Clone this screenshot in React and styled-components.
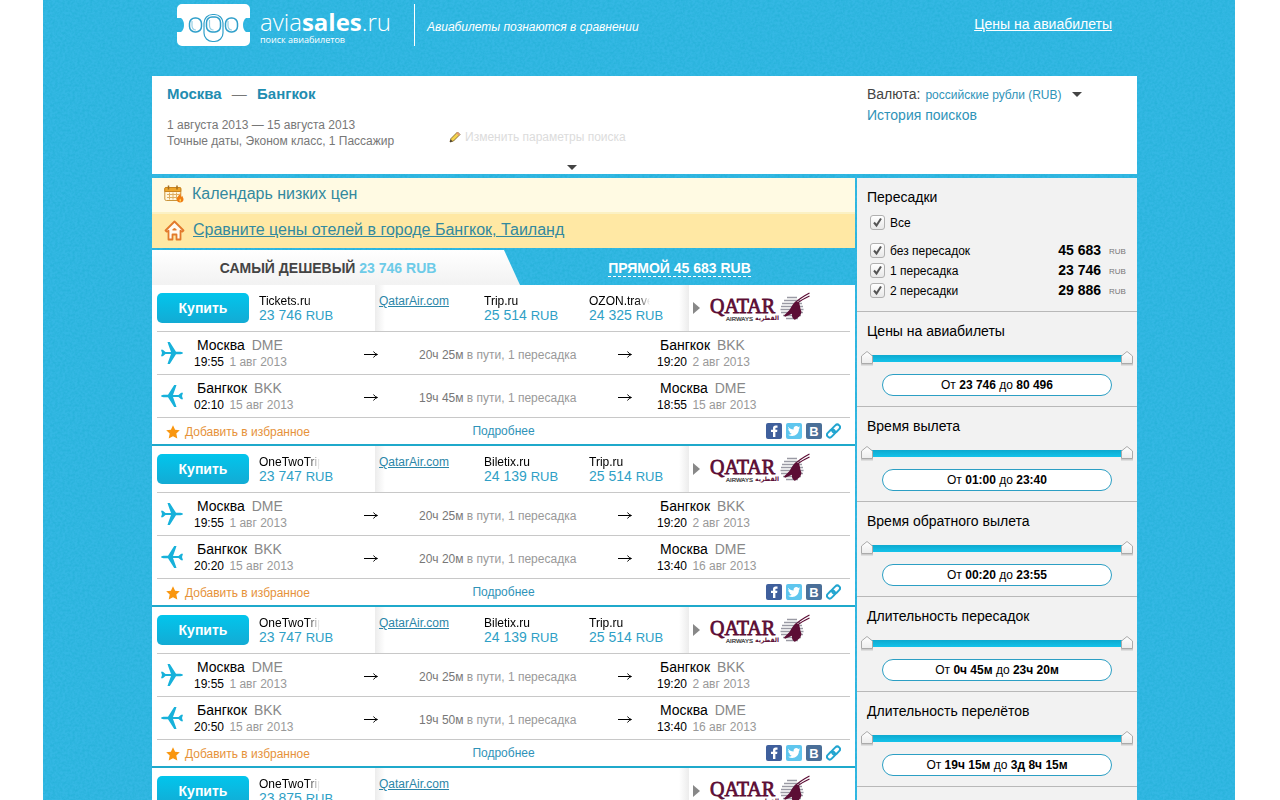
import React, { useState } from "react";
import styled, { createGlobalStyle } from "styled-components";

const legsOut = {
  from: "Москва",
  fromCode: "DME",
  fromTime: "19:55",
  fromDate: "1 авг 2013",
  duration: "20ч 25м",
  to: "Бангкок",
  toCode: "BKK",
  toTime: "19:20",
  toDate: "2 авг 2013",
};

const legBack = (fromTime, duration, toTime, toDate) => ({
  from: "Бангкок",
  fromCode: "BKK",
  fromTime,
  fromDate: "15 авг 2013",
  duration,
  to: "Москва",
  toCode: "DME",
  toTime,
  toDate,
  back: true,
});

const tickets = [
  {
    id: 1,
    best: { name: "Tickets.ru", price: "23 746" },
    offers: [
      { name: "Trip.ru", price: "25 514" },
      { name: "OZON.travel", price: "24 325" },
    ],
    legs: [legsOut, legBack("02:10", "19ч 45м", "18:55", "15 авг 2013")],
  },
  {
    id: 2,
    best: { name: "OneTwoTrip", price: "23 747" },
    offers: [
      { name: "Biletix.ru", price: "24 139" },
      { name: "Trip.ru", price: "25 514" },
    ],
    legs: [legsOut, legBack("20:20", "20ч 20м", "13:40", "16 авг 2013")],
  },
  {
    id: 3,
    best: { name: "OneTwoTrip", price: "23 747" },
    offers: [
      { name: "Biletix.ru", price: "24 139" },
      { name: "Trip.ru", price: "25 514" },
    ],
    legs: [legsOut, legBack("20:50", "19ч 50м", "13:40", "16 авг 2013")],
  },
  {
    id: 4,
    best: { name: "OneTwoTrip", price: "23 875" },
    offers: [],
    legs: [legsOut, legBack("20:50", "19ч 50м", "13:40", "16 авг 2013")],
  },
];

const stops = [
  { id: "direct", label: "без пересадок", price: "45 683" },
  { id: "one", label: "1 пересадка", price: "23 746" },
  { id: "two", label: "2 пересадки", price: "29 886" },
];

const ranges = [
  { id: "price", title: "Цены на авиабилеты", min: "23 746", max: "80 496" },
  { id: "departure", title: "Время вылета", min: "01:00", max: "23:40" },
  { id: "return", title: "Время обратного вылета", min: "00:20", max: "23:55" },
  { id: "layover", title: "Длительность пересадок", min: "0ч 45м", max: "23ч 20м" },
  { id: "flight", title: "Длительность перелётов", min: "19ч 15м", max: "3д 8ч 15м" },
];

const thumbImage = `url("data:image/svg+xml,%3Csvg xmlns='http://www.w3.org/2000/svg' width='14' height='16'%3E%3ClinearGradient id='g' x2='0' y2='1'%3E%3Cstop stop-color='%23fff'/%3E%3Cstop offset='1' stop-color='%23ececec'/%3E%3C/linearGradient%3E%3Cpath d='M1 14.500h12' stroke='%23ccc' stroke-width='2'/%3E%3Cpath d='M1.500 13.500V6L7 1.500 12.500 6v7.500z' fill='url(%23g)' stroke='%23aaa'/%3E%3C/svg%3E")`;

const grain = `url("data:image/svg+xml,%3Csvg xmlns='http://www.w3.org/2000/svg' width='160' height='160'%3E%3Cfilter id='n'%3E%3CfeTurbulence type='fractalNoise' baseFrequency='.4' numOctaves='2' stitchTiles='stitch'/%3E%3CfeColorMatrix values='0 0 0 0 0 0 0 0 0 .35 0 0 0 0 .5 .8 0 0 0 -.25'/%3E%3C/filter%3E%3Crect width='160' height='160' filter='url(%23n)' opacity='.6'/%3E%3C/svg%3E")`;

const GlobalStyle = createGlobalStyle`
  * {
    box-sizing: border-box;
  }

  body {
    margin: 0;
    background: #fff;
    color: #000;
    font-family: "Liberation Sans", Arial, sans-serif;
    font-size: 12px;
  }

  button, input, select {
    font-family: inherit;
  }

  svg {
    display: block;
    flex: none;
  }
`;

const Page = styled.div`
  height: 100vh;
  overflow-x: hidden;
  overflow-y: auto;
  scrollbar-width: none;
  padding: 0 45px 0 43px;
`;

const Backdrop = styled.div`
  min-height: 100%;
  padding: 0 98px 0 109px;
  background: #34b8e4 ${grain};
`;

// Header
const Header = styled.header`
  display: flex;
  align-items: flex-start;
  height: 76px;
  padding: 4px 25px 0;
  color: #fff;
`;

const LogoLink = styled.a`
  display: flex;
  gap: 10px;
  color: #fff;
  text-decoration: none;
`;

const LogoText = styled.span`
  display: flex;
  flex-direction: column;
  font-family: "Open Sans", "Noto Sans", sans-serif;
`;

const Brand = styled.span`
  height: 30px;
  padding-top: 2px;
  font-size: 24px;
  font-weight: 300;
  line-height: 32px;

  b {
    font-weight: 700;
  }
`;

const BrandNote = styled.span`
  font-size: 9px;
  line-height: 12px;
`;

const Slogan = styled.p`
  height: 42px;
  margin: 0 0 0 23px;
  padding-left: 12px;
  border-left: 1px solid #fff;
  font-size: 12px;
  font-style: italic;
  line-height: 46px;
`;

const HeaderLink = styled.a`
  margin-left: auto;
  color: #fff;
  font-size: 14px;
  line-height: 40px;
`;

// Search summary
const Summary = styled.section`
  display: grid;
  grid-template-columns: 1fr 270px;
  height: 98px;
  margin-bottom: 4px;
  padding: 8px 0 0 15px;
  background: #fff;
`;

const Route = styled.h1`
  margin: 0 0 13px;
  color: #1f8db1;
  font-size: 15px;
  line-height: 20px;

  span {
    margin: 0 6px;
    color: #777;
    font-weight: 400;
  }
`;

const SummaryRow = styled.div`
  display: flex;
  color: #777;
  line-height: 16px;
`;

const TripInfo = styled.div`
  width: 282px;
`;

const EditLink = styled.a`
  display: flex;
  align-items: center;
  gap: 4px;
  padding-top: 8px;
  color: #dcdcdc;
  text-decoration: none;
`;

const ExpandButton = styled.button`
  display: flex;
  justify-content: center;
  margin: 12px 0 0 400px;
  padding: 4px 0;
  border: 0;
  background: none;
`;

const Settings = styled.div`
  color: #444;
  font-size: 14px;
  line-height: 21px;
`;

const Currency = styled.label`
  display: flex;
  align-items: center;
  gap: 5px;
`;

const CurrencySelect = styled.select`
  appearance: none;
  margin-right: 5px;
  padding: 0;
  border: 0;
  background: none;
  color: #2f93b8;
  font-size: 12px;
`;

const PlainLink = styled.a`
  color: #2f93b8;
  text-decoration: none;
`;

// Results
const Columns = styled.div`
  display: grid;
  grid-template-columns: minmax(0, 1fr) 280px;
  gap: 2px;
  align-items: start;
`;

const Promo = styled.a`
  display: flex;
  align-items: center;
  gap: 8px;
  height: ${(props) => (props.$strong ? "34px" : "36px")};
  padding: 0 12px 2px;
  border-bottom: ${(props) => (props.$strong ? "0" : "2px solid #fbf1c4")};
  background: ${(props) => (props.$strong ? "#ffe8a4" : "#fffae3")};
  color: #33899e;
  font-size: 16px;
  text-decoration: ${(props) => (props.$strong ? "underline" : "none")};
`;

const Tabs = styled.div`
  display: grid;
  grid-template-columns: 368fr 335fr;
  height: 35px;
  margin-top: 2px;
`;

const Tab = styled.button`
  padding: 0 16px 0 0;
  border: 0;
  background: ${(props) =>
    props.$active ? "linear-gradient(#fff, #f2f2f2)" : "none"};
  clip-path: ${(props) =>
    props.$active
      ? "polygon(0 0, calc(100% - 16px) 0, 100% 100%, 0 100%)"
      : "none"};
  color: ${(props) => (props.$active ? "#444" : "#fff")};
  font-size: 14px;
  font-weight: 700;

  b {
    color: #6dcbe8;
  }

  span {
    border-bottom: 1px dashed #fff;
  }
`;

const Ticket = styled.article`
  padding: 0 5px;
  border-bottom: 2px solid #1fa9cb;
  background: #fff;
`;

const OfferRow = styled.div`
  display: grid;
  grid-template-columns: 92px 126px minmax(0, 1fr) 161px;
  height: 47px;
  border-bottom: 1px solid #c8c8c8;
`;

const BuyButton = styled.button`
  height: 30px;
  margin-top: 8px;
  border: 0;
  border-radius: 5px;
  background: linear-gradient(#02c5ec, #13abd4);
  color: #fff;
  font-size: 14px;
  font-weight: 700;
`;

const Offer = styled.div`
  padding: 9px 0 0 ${(props) => (props.$first ? "10px" : "0")};
`;

const AgentName = styled.div`
  width: 61px;
  overflow: hidden;
  line-height: 14px;
  white-space: nowrap;
  mask-image: linear-gradient(90deg, #000 48px, transparent);
`;

const Price = styled.a`
  color: #2f9fc6;
  font-size: 14px;
  line-height: 14px;
  text-decoration: none;

  small {
    font-size: 13px;
  }
`;

const OfferStrip = styled.div`
  display: grid;
  grid-template-columns: 105px 105px 1fr;
  padding-left: 4px;
  background:
    linear-gradient(90deg, #ececec, #fff) left / 10px 100% no-repeat,
    linear-gradient(270deg, #ececec, #fff) right / 10px 100% no-repeat;
`;

const AgentLink = styled.a`
  color: #2b86a8;
  line-height: 14px;
`;

const Airline = styled.div`
  display: flex;
  align-items: center;
  gap: 9px;
  padding-left: 4px;
`;

const Leg = styled.div`
  display: grid;
  grid-template-columns: 37px 170px 55px 199px 39px 1fr;
  align-items: center;
  height: 43px;
  border-bottom: 1px solid #c8c8c8;
`;

const PlaneCell = styled.div`
  padding-left: 3px;
`;

const City = styled.div`
  padding-left: 3px;
  font-size: 14px;
  line-height: 17px;

  span {
    margin-left: 3px;
    color: #888;
  }
`;

const Moment = styled.div`
  line-height: 16px;

  span {
    margin-left: 2px;
    color: #999;
  }
`;

const Duration = styled.div`
  padding-top: 3px;
  color: #999;

  span {
    color: #777;
  }
`;

const TicketFooter = styled.footer`
  display: grid;
  grid-template-columns: 1fr auto 1fr;
  align-items: center;
  height: 26px;
`;

const Favorite = styled.button`
  display: flex;
  align-items: center;
  gap: 5px;
  padding: 2px 0 0 9px;
  border: 0;
  background: none;
  color: #e6923a;
  font-size: 12px;
`;

const Share = styled.div`
  display: flex;
  justify-content: flex-end;
  gap: 4px;
  padding-right: 9px;

  a {
    display: block;
  }
`;

// Filters
const Sidebar = styled.aside`
  background: #f2f2f2;
`;

const Filter = styled.section`
  min-height: ${(props) => (props.$tall ? "134px" : "95px")};
  padding-top: 10px;
  border-bottom: 1px solid #b8b8b8;
`;

const FilterTitle = styled.h2`
  margin: 0 10px;
  font-size: 14px;
  font-weight: 400;
  line-height: 18px;
`;

const CheckRow = styled.label`
  display: grid;
  grid-template-columns: 15px 1fr auto 17px;
  align-items: center;
  height: 20px;
  margin: ${(props) => (props.$lead ? "6px 11px 8px 13px" : "0 11px 0 13px")};

  > span {
    padding: 2px 0 0 5px;
  }

  b {
    margin-right: 8px;
    font-size: 14px;
  }

  small {
    padding-top: 3px;
    color: #777;
    font-size: 8px;
  }
`;

const Checkbox = styled.input`
  appearance: none;
  width: 15px;
  height: 15px;
  margin: 0;
  border: 1px solid #b0b0b0;
  border-radius: 3px;
  background: linear-gradient(#fff, #e8e8e8);

  &:checked {
    background:
      url("data:image/svg+xml,%3Csvg xmlns='http://www.w3.org/2000/svg' width='13' height='13'%3E%3Cpath d='M3 6.500 5.500 9.500 10 2.500' fill='none' stroke='%23555' stroke-width='2'/%3E%3C/svg%3E"),
      linear-gradient(#fff, #e8e8e8);
  }
`;

const RangeTrack = styled.div`
  display: grid;
  height: 16px;
  margin: 10px 3px 8px;
  background: linear-gradient(#0ea9cf, #14c3ea) 7px 5px / calc(100% - 14px) 7px
    no-repeat;
`;

const RangeInput = styled.input`
  grid-area: 1 / 1;
  appearance: none;
  width: 100%;
  height: 16px;
  margin: 0;
  background: none;
  pointer-events: none;

  &::-webkit-slider-thumb {
    appearance: none;
    width: 14px;
    height: 16px;
    background: ${thumbImage};
    pointer-events: auto;
  }
`;

const RangeValue = styled.div`
  height: 22px;
  margin: 0 25px;
  border: 1px solid #2c9fc4;
  border-radius: 11px;
  background: #fff;
  line-height: 20px;
  text-align: center;
`;

const TicketMark = () => (
  <svg width="73" height="42" viewBox="0 0 73 42">
    <path
      fill="#fff"
      d="M5 0h63a5 5 0 0 1 5 5v9h-4c-2 1.500-3 4-3 7s1 5.500 3 7h4v9a5 5 0 0 1-5 5H5a5 5 0 0 1-5-5v-9h4c2-1.500 3-4 3-7s-1-5.500-3-7H0V5a5 5 0 0 1 5-5z"
    />
    <g fill="none" stroke="#2f9fca" strokeWidth="1.200">
      <rect x="12.500" y="14" width="12" height="14" rx="5.500" strokeWidth="1.500" />
      <rect x="48.500" y="14" width="12" height="14" rx="5.500" strokeWidth="1.500" />
      <rect x="27" y="10.500" width="19" height="27" rx="8.500" fill="#fff" />
      <rect x="29.500" y="13" width="14" height="15" rx="5.500" strokeWidth="1.500" />
      <path d="M15 17v5q.5 4 4 4M51 17v5q.5 4 4 4M32.500 16v6q.5 4 4 4" opacity=".5" />
    </g>
  </svg>
);

const Caret = () => (
  <svg width="10" height="5" viewBox="0 0 10 5">
    <path d="M0 0h10L5 5z" fill="#444" />
  </svg>
);

const Pencil = () => (
  <svg width="12" height="12" viewBox="0 0 12 12">
    <path d="M1 11l1-3.500L8.500 1 11 3.500 4.500 10z" fill="#f4d24c" stroke="#6d5222" strokeWidth=".8" />
    <path d="M8.500 1 11 3.500 9.800 4.700 7.300 2.200z" fill="#e59a77" />
    <path d="M1 11l.7-2.500 1.800 1.800z" fill="#333" />
  </svg>
);

const CalendarIcon = () => (
  <svg width="20" height="18" viewBox="0 0 20 18">
    <rect x=".8" y="2.500" width="16" height="13" rx="1.500" fill="#fff6dc" stroke="#c9943c" />
    <path d="M.8 3.500a1 1 0 0 1 1-1h14a1 1 0 0 1 1 1V6.500H.8z" fill="#eda52b" stroke="#c98420" />
    <path d="M4.500.5v4M13 .5v4" stroke="#a56d1d" strokeWidth="1.500" />
    <path d="M3 9.500h12M3 12.500h12M5.500 7.500v7M9 7.500v7M12.500 7.500v7" stroke="#dfae62" />
    <path d="M16 7.500c.2 2.500-3.200 4-3.200 7 0 2 1.500 3 3.300 3s3.400-1 3.400-3c0-1.800-1-2.500-1.300-3.700-.5.400-.7.900-.8 1.400C16.500 11 17 9 16 7.500z" fill="#ef7d12" />
    <path d="M16.200 13.500c-.8 1-1.300 3 0 3.200 1.400-.2 1-2.200 0-3.200z" fill="#ffd45a" />
  </svg>
);

const HouseIcon = () => (
  <svg width="21" height="21" viewBox="0 0 21 21">
    <path
      d="M10.500 1.500 1.500 10.500l1.200 1.200 1.800-1V19.500h4v-5h4v5h4v-8.800l1.800 1 1.200-1.200z"
      fill="#fffaf0"
      stroke="#e27a2b"
      strokeWidth="1.800"
      strokeLinejoin="round"
    />
    <path d="M8.500 9.500q2-3 4 0v1h-4z" fill="#e27a2b" />
  </svg>
);

const Plane = ({ back }) => (
  <svg width="24" height="24" viewBox="0 0 24 24">
    <path
      transform={back ? "translate(24 0) scale(-1 1)" : undefined}
      fill="#17b1da"
      d="M1 8.800h1.800l2.700 2.200H11L8.300 3.500 7.500 1h2.300L16 10.800h4.500q2.500.3 2.500 1.200t-2.500 1.200H16L9.800 23H7.500l.8-2.500L11 13H5.500l-2.700 2.200H1L2 12z"
    />
  </svg>
);

const Arrow = () => (
  <svg width="14" height="9" viewBox="0 0 14 9">
    <path d="M0 5.500h13" stroke="#000" />
    <path d="M9.500 2.500Q11 5 13.500 5.500 11 6 9.500 8.500" fill="none" stroke="#000" />
  </svg>
);

const Star = () => (
  <svg width="14" height="14" viewBox="0 0 14 14">
    <path d="M7 .3 9.100 4.800l4.700.5-3.500 3.300 1 4.900L7 11.200l-4.300 2.300 1-4.900L.2 5.300l4.700-.5z" fill="#f9960f" />
  </svg>
);

const FacebookIcon = () => (
  <svg width="16" height="16" viewBox="0 0 16 16">
    <rect width="16" height="16" rx="2" fill="#3f5f9c" />
    <path d="M7 14V9H5V6.800h2V5.200C7 3.300 8 2.500 9.600 2.500h1.900v2.200h-1.200c-.7 0-.9.300-.9.900v1.200h2L11.100 9H9.400v5z" fill="#fff" />
  </svg>
);

const TwitterIcon = () => (
  <svg width="16" height="16" viewBox="0 0 16 16">
    <rect width="16" height="16" rx="2" fill="#5fc6ee" />
    <path d="M2 3.800c1.500 1.700 3.200 2.600 5.600 2.700-.3-2 .9-3.500 2.700-3.500.8 0 1.500.3 2 .9l1.700-.6-1.100 1.500 1.300-.3-1.300 1.400c.1 4-3 7-6.600 7-1.600 0-3-.4-4.200-1.200 1.500.1 2.700-.3 3.700-1-1.200-.1-2-.8-2.400-1.900h1.100C3.100 8.400 2.300 7.400 2.300 6l1.100.3C2.100 5.300 1.900 4.500 2 3.800z" fill="#fff" />
  </svg>
);

const VkIcon = () => (
  <svg width="16" height="16" viewBox="0 0 16 16">
    <rect width="16" height="16" rx="2" fill="#4a6f98" />
    <text x="8" y="12.500" textAnchor="middle" fill="#fff" fontFamily="Liberation Sans" fontSize="13" fontWeight="700">
      В
    </text>
  </svg>
);

const LinkIcon = () => (
  <svg width="15" height="16" viewBox="0 0 15 16">
    <g transform="rotate(-45 7.500 8)" fill="none" stroke="#22a5d0" strokeWidth="2">
      <rect x="-.5" y="5.300" width="9" height="5.400" rx="2.700" />
      <rect x="6.500" y="5.300" width="9" height="5.400" rx="2.700" />
    </g>
  </svg>
);

const QatarLogo = () => (
  <svg width="102" height="32" viewBox="0 0 102 32" role="img" aria-label="Qatar Airways">
    <g fill="#5c0d35">
      <text x="1" y="21" fontFamily="Liberation Serif" fontSize="20" stroke="#5c0d35" strokeWidth=".8">
        QATAR
      </text>
      <text x="46" y="28" fontFamily="DejaVu Sans" fontSize="6" fontWeight="700">
        القطرية
      </text>
    </g>
    <text x="17" y="29" fill="#333" fontFamily="Liberation Sans" fontSize="6" stroke="#333" strokeWidth=".2">
      AIRWAYS
    </text>
    <path
      d="M78 5.500h10M75 8.500h16M73 11.500h20M72 14.500h22M71.500 17.500h23M72 20.500h22M74 23.500h18M77 26.500h12"
      stroke="#9a9aa4"
      strokeWidth="1.700"
    />
    <path
      d="M86.500 9.500c-2.500 2-4 5-6 8.500L75 23.500l1 1.300 7-3c-.5 2.500.5 4.500 2.500 6 3.500-1.500 6.500-4 7-8-1.500-2.500-1-5.500-2.500-9.300z"
      fill="#5c0d35"
    />
    <path d="M86 11Q91 6 100.500 1M88 11.500Q92 8 100.500 4" fill="none" stroke="#5c0d35" strokeWidth="1.200" />
  </svg>
);

const PlayMark = () => (
  <svg width="7" height="12" viewBox="0 0 7 12">
    <path d="M0 0 7 6 0 12z" fill="#888" />
  </svg>
);

function TicketCard({ ticket }) {
  return (
    <Ticket>
      <OfferRow>
        <BuyButton>Купить</BuyButton>
        <Offer $first>
          <AgentName>{ticket.best.name}</AgentName>
          <Price href="#">
            {ticket.best.price} <small>RUB</small>
          </Price>
        </Offer>
        <OfferStrip>
          <Offer>
            <AgentLink href="#">QatarAir.com</AgentLink>
          </Offer>
          {ticket.offers.map((offer) => (
            <Offer key={offer.name}>
              <AgentName>{offer.name}</AgentName>
              <Price href="#">
                {offer.price} <small>RUB</small>
              </Price>
            </Offer>
          ))}
        </OfferStrip>
        <Airline>
          <PlayMark />
          <QatarLogo />
        </Airline>
      </OfferRow>

      {ticket.legs.map((leg) => (
        <Leg key={leg.from}>
          <PlaneCell>
            <Plane back={leg.back} />
          </PlaneCell>
          <div>
            <City>
              {leg.from} <span>{leg.fromCode}</span>
            </City>
            <Moment>
              {leg.fromTime} <span>{leg.fromDate}</span>
            </Moment>
          </div>
          <Arrow />
          <Duration>
            <span>{leg.duration}</span> в пути, 1 пересадка
          </Duration>
          <Arrow />
          <div>
            <City>
              {leg.to} <span>{leg.toCode}</span>
            </City>
            <Moment>
              {leg.toTime} <span>{leg.toDate}</span>
            </Moment>
          </div>
        </Leg>
      ))}

      <TicketFooter>
        <Favorite>
          <Star />
          Добавить в избранное
        </Favorite>
        <PlainLink href="#">Подробнее</PlainLink>
        <Share>
          <a href="#" aria-label="Facebook">
            <FacebookIcon />
          </a>
          <a href="#" aria-label="Twitter">
            <TwitterIcon />
          </a>
          <a href="#" aria-label="ВКонтакте">
            <VkIcon />
          </a>
          <a href="#" aria-label="Ссылка">
            <LinkIcon />
          </a>
        </Share>
      </TicketFooter>
    </Ticket>
  );
}

function RangeFilter({ range }) {
  return (
    <Filter>
      <FilterTitle>{range.title}</FilterTitle>
      <RangeTrack>
        <RangeInput type="range" aria-label={`${range.title}: от`} defaultValue="0" />
        <RangeInput type="range" aria-label={`${range.title}: до`} defaultValue="100" />
      </RangeTrack>
      <RangeValue>
        От <b>{range.min}</b> до <b>{range.max}</b>
      </RangeValue>
    </Filter>
  );
}

export default function App() {
  const [checked, setChecked] = useState({ direct: true, one: true, two: true });
  const all = stops.every((stop) => checked[stop.id]);

  const toggleAll = () => {
    setChecked({ direct: !all, one: !all, two: !all });
  };

  const toggle = (id) => {
    setChecked((prev) => ({ ...prev, [id]: !prev[id] }));
  };

  return (
    <Page>
      <GlobalStyle />
      <Backdrop>
        <Header>
          <LogoLink href="#">
            <TicketMark />
            <LogoText>
              <Brand>
                avia<b>sales</b>.ru
              </Brand>
              <BrandNote>поиск авиабилетов</BrandNote>
            </LogoText>
          </LogoLink>
          <Slogan>Авиабилеты познаются в сравнении</Slogan>
          <HeaderLink href="#">Цены на авиабилеты</HeaderLink>
        </Header>

        <Summary>
          <div>
            <Route>
              Москва <span>—</span> Бангкок
            </Route>
            <SummaryRow>
              <TripInfo>
                1 августа 2013 — 15 августа 2013
                <br />
                Точные даты, Эконом класс, 1 Пассажир
              </TripInfo>
              <EditLink href="#">
                <Pencil />
                Изменить параметры поиска
              </EditLink>
            </SummaryRow>
            <ExpandButton aria-label="Развернуть">
              <Caret />
            </ExpandButton>
          </div>
          <Settings>
            <Currency>
              Валюта:
              <CurrencySelect>
                <option>российские рубли (RUB)</option>
              </CurrencySelect>
              <Caret />
            </Currency>
            <PlainLink href="#">История поисков</PlainLink>
          </Settings>
        </Summary>

        <Columns>
          <main>
            <Promo href="#">
              <CalendarIcon />
              Календарь низких цен
            </Promo>
            <Promo href="#" $strong>
              <HouseIcon />
              Сравните цены отелей в городе Бангкок, Таиланд
            </Promo>
            <Tabs>
              <Tab $active>
                САМЫЙ ДЕШЕВЫЙ <b>23 746 RUB</b>
              </Tab>
              <Tab>
                <span>ПРЯМОЙ 45 683 RUB</span>
              </Tab>
            </Tabs>
            {tickets.map((ticket) => (
              <TicketCard key={ticket.id} ticket={ticket} />
            ))}
          </main>

          <Sidebar>
            <Filter $tall>
              <FilterTitle>Пересадки</FilterTitle>
              <CheckRow $lead>
                <Checkbox type="checkbox" checked={all} onChange={toggleAll} />
                <span>Все</span>
              </CheckRow>
              {stops.map((stop) => (
                <CheckRow key={stop.id}>
                  <Checkbox
                    type="checkbox"
                    checked={checked[stop.id]}
                    onChange={() => toggle(stop.id)}
                  />
                  <span>{stop.label}</span>
                  <b>{stop.price}</b>
                  <small>RUB</small>
                </CheckRow>
              ))}
            </Filter>
            {ranges.map((range) => (
              <RangeFilter key={range.id} range={range} />
            ))}
            <Filter />
          </Sidebar>
        </Columns>
      </Backdrop>
    </Page>
  );
}
